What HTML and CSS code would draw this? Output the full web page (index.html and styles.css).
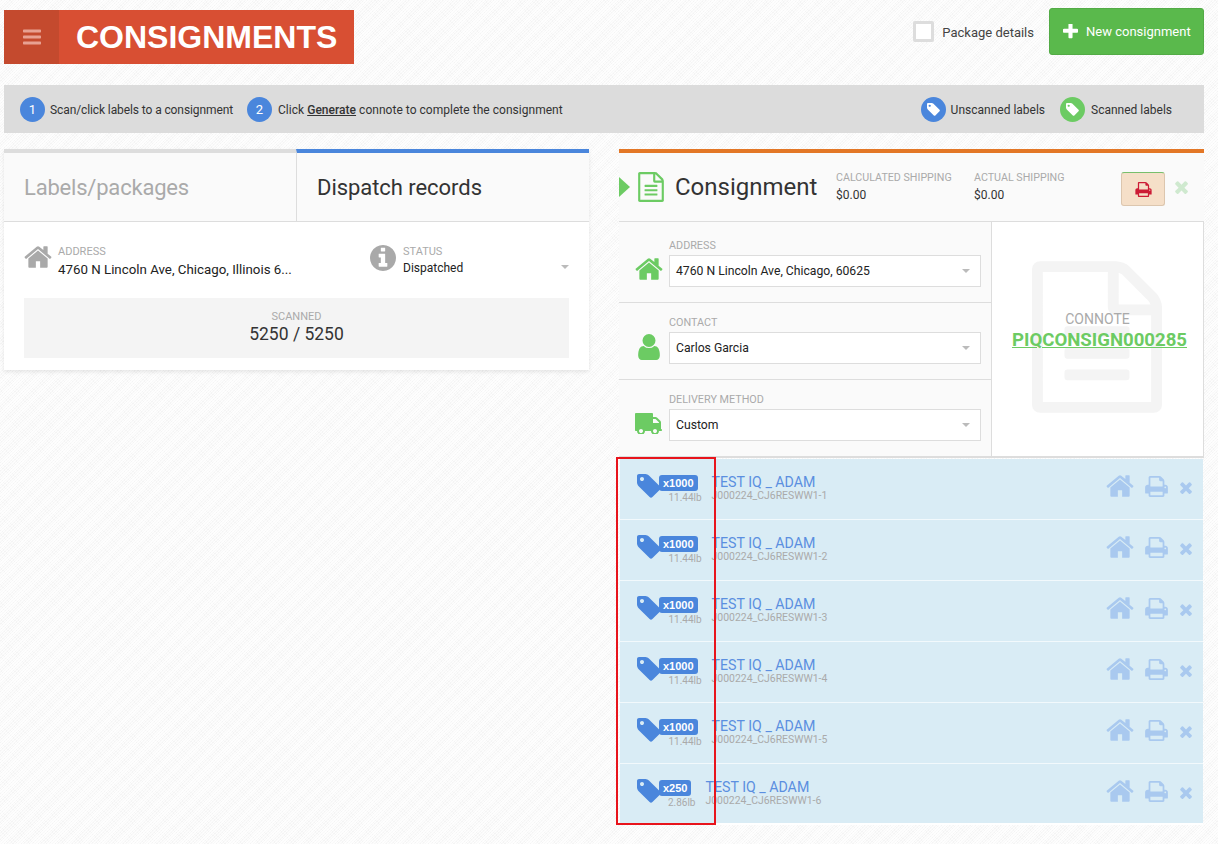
FILE: index.html
```
<!DOCTYPE html>
<html lang="en">
<head>
<meta charset="utf-8">
<title>Consignments</title>
<link rel="stylesheet" href="styles.css">
</head>
<body>
<svg class="defs" width="0" height="0" aria-hidden="true">
  <symbol id="i-home" viewBox="0 0 1792 1792"><path d="M1472 992v480q0 26-19 45t-45 19h-384v-384h-256v384h-384q-26 0-45-19t-19-45v-480q0-1 .5-3t.5-3l575-474 575 474q1 2 1 6zm223-69l-62 74q-8 9-21 11h-3q-13 0-21-7l-692-577-692 577q-12 8-24 7-13-2-21-11l-62-74q-8-10-7-23.5t11-21.5l719-599q32-26 76-26t76 26l244 204v-195q0-14 9-23t23-9h192q14 0 23 9t9 23v408l219 182q10 8 11 21.5t-7 23.5z"/></symbol>
  <symbol id="i-tag" viewBox="128 128 1536 1536"><path d="M576 448q0-53-37.5-90.5t-90.5-37.5-90.5 37.5-37.5 90.5 37.5 90.5 90.5 37.5 90.5-37.5 37.5-90.5zm1067 576q0 53-37 90l-491 492q-39 37-91 37-53 0-90-37l-715-716q-38-37-64.5-101t-26.5-117v-416q0-52 38-90t90-38h416q53 0 117 26.5t102 64.5l715 714q37 39 37 91z"/></symbol>
  <symbol id="i-print" viewBox="64 128 1664 1536"><path d="M448 1536h896v-256h-896v256zm0-640h896v-384h-160q-40 0-68-28t-28-68v-160h-640v640zm1152 64q0-26-19-45t-45-19-45 19-19 45 19 45 45 19 45-19 19-45zm128 0v416q0 13-9.5 22.5t-22.5 9.5h-224v160q0 40-28 68t-68 28h-960q-40 0-68-28t-28-68v-160h-224q-13 0-22.5-9.5t-9.5-22.5v-416q0-79 56.5-135.5t135.5-56.5h64v-544q0-40 28-68t68-28h672q40 0 88 20t76 48l152 152q28 28 48 76t20 88v256h64q79 0 135.5 56.5t56.5 135.5z"/></symbol>
  <symbol id="i-times" viewBox="300 340 1190 1214"><path d="M1490 1322q0 40-28 68l-136 136q-28 28-68 28t-68-28l-294-294-294 294q-28 28-68 28t-68-28l-136-136q-28-28-28-68t28-68l294-294-294-294q-28-28-28-68t28-68l136-136q28-28 68-28t68 28l294 294 294-294q28-28 68-28t68 28l136 136q28 28 28 68t-28 68l-294 294 294 294q28 28 28 68z"/></symbol>
  <symbol id="i-plus" viewBox="192 192 1408 1408"><path d="M1600 736v192q0 40-28 68t-68 28h-416v416q0 40-28 68t-68 28h-192q-40 0-68-28t-28-68v-416h-416q-40 0-68-28t-28-68v-192q0-40 28-68t68-28h416v-416q0-40 28-68t68-28h192q40 0 68 28t28 68v416h416q40 0 68 28t28 68z"/></symbol>
  <symbol id="i-bars" viewBox="128 256 1536 1280"><path d="M1664 1344v128q0 26-19 45t-45 19h-1408q-26 0-45-19t-19-45v-128q0-26 19-45t45-19h1408q26 0 45 19t19 45zm0-512v128q0 26-19 45t-45 19h-1408q-26 0-45-19t-19-45v-128q0-26 19-45t45-19h1408q26 0 45 19t19 45zm0-512v128q0 26-19 45t-45 19h-1408q-26 0-45-19t-19-45v-128q0-26 19-45t45-19h1408q26 0 45 19t19 45z"/></symbol>
  <symbol id="i-user" viewBox="256 128 1280 1536"><path d="M1536 1399q0 109-62.5 187t-150.5 78h-854q-88 0-150.5-78t-62.5-187q0-85 8.5-160.5t31.5-152 58.5-131 94-89 134.5-34.5q131 128 313 128t313-128q76 0 134.5 34.5t94 89 58.5 131 31.5 152 8.5 160.5zm-256-887q0 159-112.5 271.5t-271.5 112.5-271.5-112.5-112.5-271.5 112.5-271.5 271.5-112.5 271.5 112.5 112.5 271.5z"/></symbol>
  <symbol id="i-truck" viewBox="0 256 1792 1280"><path transform="matrix(-1 0 0 1 1792 0)" d="M640 1408q0-52-38-90t-90-38-90 38-38 90 38 90 90 38 90-38 38-90zm-384-512h384v-256h-158q-13 0-22 9l-195 195q-9 9-9 22v30zm1280 512q0-52-38-90t-90-38-90 38-38 90 38 90 90 38 90-38 38-90zm256-1088v1024q0 15-4 26.5t-13.5 18.5-16.5 11.5-23.5 6-22.5 2-25.5 0-22.5-.5q0 106-75 181t-181 75-181-75-75-181h-384q0 106-75 181t-181 75-181-75-75-181h-64q-3 0-22.5.5t-25.5 0-22.5-2-23.5-6-16.5-11.5-13.5-18.5-4-26.5q0-26 19-45t45-19v-320q0-8-.5-35t0-38 2.5-34.5 6.5-37 14-30.5 22.5-30l198-198q19-19 50.5-32t58.5-13h160v-192q0-26 19-45t45-19h1024q26 0 45 19t19 45z"/></symbol>
  <symbol id="i-file" viewBox="128 0 1536 1792"><path d="M1596 380q28 28 48 76t20 88v1152q0 40-28 68t-68 28h-1344q-40 0-68-28t-28-68v-1600q0-40 28-68t68-28h896q40 0 88 20t76 48zm-444-244v376h376q-10-29-22-41l-313-313q-12-12-41-22zm384 1528v-1024h-416q-40 0-68-28t-28-68v-416h-768v1536h1280zm-1024-864q0-14 9-23t23-9h704q14 0 23 9t9 23v64q0 14-9 23t-23 9h-704q-14 0-23-9t-9-23v-64zm736 224q14 0 23 9t9 23v64q0 14-9 23t-23 9h-704q-14 0-23-9t-9-23v-64q0-14 9-23t23-9h704zm0 256q14 0 23 9t9 23v64q0 14-9 23t-23 9h-704q-14 0-23-9t-9-23v-64q0-14 9-23t23-9h704z"/></symbol>
  <symbol id="i-info" viewBox="128 128 1536 1536"><path d="M1152 1376v-160q0-14-9-23t-23-9h-96v-512q0-14-9-23t-23-9h-320q-14 0-23 9t-9 23v160q0 14 9 23t23 9h96v320h-96q-14 0-23 9t-9 23v160q0 14 9 23t23 9h448q14 0 23-9t9-23zm-128-896v-160q0-14-9-23t-23-9h-192q-14 0-23 9t-9 23v160q0 14 9 23t23 9h192q14 0 23-9t9-23zm640 416q0 209-103 385.5t-279.5 279.5-385.5 103-385.5-103-279.5-279.5-103-385.5 103-385.5 279.5-279.5 385.5-103 385.5 103 279.5 279.5 103 385.5z"/></symbol>
</svg>

<div class="page">
  <header class="topbar">
    <div class="brand">
      <div class="brand-menu"><svg class="ico-bars"><use href="#i-bars"/></svg></div>
      <h1 class="brand-title">CONSIGNMENTS</h1>
    </div>
    <div class="top-actions">
      <span class="checkbox"></span>
      <span class="check-label">Package details</span>
      <button class="btn-new"><svg class="ico-plus"><use href="#i-plus"/></svg>New consignment</button>
    </div>
  </header>

  <section class="helpbar">
    <div class="step step-first"><span class="dot dot-blue">1</span><span class="step-text step-tight">Scan/click labels to a consignment</span></div>
    <div class="step step-second"><span class="dot dot-blue">2</span><span class="step-text step-loose">Click <u class="strong">Generate</u> connote to complete the consignment</span></div>
    <div class="legend">
      <div class="step"><span class="dot dot-blue"><svg class="ico-dot"><use href="#i-tag"/></svg></span><span class="step-text">Unscanned labels</span></div>
      <div class="step step-wide"><span class="dot dot-green"><svg class="ico-dot"><use href="#i-tag"/></svg></span><span class="step-text">Scanned labels</span></div>
    </div>
  </section>

  <main class="columns">
    <section class="left card">
      <div class="tabs">
        <div class="tab tab-off">Labels/packages</div>
        <div class="tab tab-on">Dispatch records</div>
      </div>
      <div class="record">
        <div class="record-top">
          <div class="rec-addr">
            <svg class="ico-rec-home"><use href="#i-home"/></svg>
            <div>
              <div class="tiny">ADDRESS</div>
              <div class="rec-value">4760 N Lincoln Ave, Chicago, Illinois 6...</div>
            </div>
          </div>
          <div class="rec-status">
            <svg class="ico-info"><use href="#i-info"/></svg>
            <div>
              <div class="tiny">STATUS</div>
              <div class="rec-status-value">Dispatched</div>
            </div>
            <span class="caret caret-status"></span>
          </div>
        </div>
        <div class="scanned">
          <div class="tiny">SCANNED</div>
          <div class="scanned-num">5250 / 5250</div>
        </div>
      </div>
    </section>

    <section class="right">
      <div class="cons-head">
        <span class="arrow"></span>
        <svg class="ico-file"><use href="#i-file"/></svg>
        <h2 class="cons-title">Consignment</h2>
        <div class="ship ship-calc"><div class="ship-label">CALCULATED SHIPPING</div><div class="ship-val">$0.00</div></div>
        <div class="ship ship-actual"><div class="ship-label">ACTUAL SHIPPING</div><div class="ship-val">$0.00</div></div>
        <button class="btn-print"><svg class="ico-print-red"><use href="#i-print"/></svg></button>
        <svg class="ico-close"><use href="#i-times"/></svg>
      </div>

      <div class="cons-body">
        <div class="fields">
          <div class="field field-first">
            <svg class="ico-field ico-field-home"><use href="#i-home"/></svg>
            <div class="field-main"><div class="field-label">ADDRESS</div><div class="select">4760 N Lincoln Ave, Chicago, 60625<span class="caret"></span></div></div>
          </div>
          <div class="field">
            <svg class="ico-field ico-field-user"><use href="#i-user"/></svg>
            <div class="field-main"><div class="field-label">CONTACT</div><div class="select">Carlos Garcia<span class="caret"></span></div></div>
          </div>
          <div class="field">
            <svg class="ico-field ico-field-truck"><use href="#i-truck"/></svg>
            <div class="field-main"><div class="field-label">DELIVERY METHOD</div><div class="select">Custom<span class="caret"></span></div></div>
          </div>
        </div>
        <div class="connote">
          <svg class="ico-water"><use href="#i-file"/></svg>
          <div class="connote-label">CONNOTE</div>
          <a class="connote-num">PIQCONSIGN000285</a>
        </div>
      </div>

      <div class="list">
        <div class="row"><svg class="ico-tag"><use href="#i-tag"/></svg><div class="qty"><span class="badge">x1000</span><span class="lb">11.44lb</span></div><div class="info"><div class="name">TEST IQ _ ADAM</div><div class="code">J000224_CJ6RESWW1-1</div></div><div class="row-actions"><svg class="act-home"><use href="#i-home"/></svg><svg class="act-print"><use href="#i-print"/></svg><svg class="act-x"><use href="#i-times"/></svg></div></div>
        <div class="row"><svg class="ico-tag"><use href="#i-tag"/></svg><div class="qty"><span class="badge">x1000</span><span class="lb">11.44lb</span></div><div class="info"><div class="name">TEST IQ _ ADAM</div><div class="code">J000224_CJ6RESWW1-2</div></div><div class="row-actions"><svg class="act-home"><use href="#i-home"/></svg><svg class="act-print"><use href="#i-print"/></svg><svg class="act-x"><use href="#i-times"/></svg></div></div>
        <div class="row"><svg class="ico-tag"><use href="#i-tag"/></svg><div class="qty"><span class="badge">x1000</span><span class="lb">11.44lb</span></div><div class="info"><div class="name">TEST IQ _ ADAM</div><div class="code">J000224_CJ6RESWW1-3</div></div><div class="row-actions"><svg class="act-home"><use href="#i-home"/></svg><svg class="act-print"><use href="#i-print"/></svg><svg class="act-x"><use href="#i-times"/></svg></div></div>
        <div class="row"><svg class="ico-tag"><use href="#i-tag"/></svg><div class="qty"><span class="badge">x1000</span><span class="lb">11.44lb</span></div><div class="info"><div class="name">TEST IQ _ ADAM</div><div class="code">J000224_CJ6RESWW1-4</div></div><div class="row-actions"><svg class="act-home"><use href="#i-home"/></svg><svg class="act-print"><use href="#i-print"/></svg><svg class="act-x"><use href="#i-times"/></svg></div></div>
        <div class="row"><svg class="ico-tag"><use href="#i-tag"/></svg><div class="qty"><span class="badge">x1000</span><span class="lb">11.44lb</span></div><div class="info"><div class="name">TEST IQ _ ADAM</div><div class="code">J000224_CJ6RESWW1-5</div></div><div class="row-actions"><svg class="act-home"><use href="#i-home"/></svg><svg class="act-print"><use href="#i-print"/></svg><svg class="act-x"><use href="#i-times"/></svg></div></div>
        <div class="row row-last"><svg class="ico-tag"><use href="#i-tag"/></svg><div class="qty"><span class="badge">x250</span><span class="lb">2.86lb</span></div><div class="info"><div class="name">TEST IQ _ ADAM</div><div class="code">J000224_CJ6RESWW1-6</div></div><div class="row-actions"><svg class="act-home"><use href="#i-home"/></svg><svg class="act-print"><use href="#i-print"/></svg><svg class="act-x"><use href="#i-times"/></svg></div></div>
        <div class="highlight"></div>
      </div>
    </section>
  </main>
</div>
</body>
</html>
```

FILE: styles.css
```
* { box-sizing: border-box; }
html, body { height: 100%; }
body {
  margin: 0;
  overflow: hidden;
  font-family: Roboto, "Liberation Sans", sans-serif;
  color: #333;
  background-color: #f9f9f9;
  background-image:
    repeating-linear-gradient(135deg, rgba(255,255,255,.8) 0 1px, transparent 1px 2px),
    repeating-linear-gradient(45deg, rgba(230,230,230,.25) 0 1px, transparent 1px 3px);
}
.defs { position: absolute; }
svg { fill: currentColor; display: block; flex: none; }
.page { padding: 0 14px 0 4px; }

.topbar { display: flex; justify-content: space-between; height: 85px; }
.brand { display: flex; margin-top: 10px; width: 350px; height: 54px; background: #d84f33; }
.brand-menu { width: 55px; background: #c44a2e; display: flex; align-items: center; justify-content: center; color: #e8a192; }
.ico-bars { width: 18px; height: 16px; }
.brand-title { margin: 0 0 0 17px; font: 700 32px/54px "Liberation Sans", Arial, sans-serif; color: #fff; }
.top-actions { display: flex; align-items: center; height: 47px; margin-top: 8px; }
.checkbox { width: 21px; height: 21px; background: #fff; border: 3px solid #ddd; border-radius: 2px; margin-top: -1px; }
.check-label { font-size: 13px; margin: 2px 15px 0 8px; color: #444; }
.btn-new {
  width: 155px; height: 47px; display: flex; align-items: center; padding: 0 0 1px 13px;
  background: #5ab94c; border: 1px solid #53ab46; border-radius: 3px; color: #fff;
  font: 400 13px Roboto, sans-serif;
}
.ico-plus { width: 15px; height: 15px; margin-right: 8px; }

.helpbar { display: flex; align-items: center; height: 48px; padding: 1px 0 0 16px; background: #dcdcdc; font-size: 12px; color: #333; }
.step { display: flex; align-items: center; gap: 5px; margin-right: 15px; }
.step-first { margin-right: 14px; }
.step-second { gap: 6px; }
.step-text { margin-top: 1px; }
.step-tight { letter-spacing: -.1px; }
.step-loose { letter-spacing: .03px; }
.legend { margin-left: auto; display: flex; margin-right: 18px; }
.legend .step-wide { gap: 6px; margin-right: 14px; }
.dot { width: 25px; height: 25px; border-radius: 50%; display: flex; align-items: center; justify-content: center; color: #fff; font-size: 13px; }
.dot-blue { background: #4a86dc; }
.dot-green { background: #6ccb63; }
.ico-dot { width: 13px; height: 13px; }
.strong { font-weight: 500; }

.columns { display: flex; align-items: flex-start; gap: 30px; margin-top: 16px; }
.card { background: #fff; box-shadow: 0 2px 4px rgba(0,0,0,.09); }
.left { width: 585px; height: 221px; }
.tabs { display: flex; height: 73px; border-bottom: 1px solid #ddd; background: #fafafa; }
.tab { padding: 22px 0 0 20px; font-size: 22px; line-height: 26px; border-top: 4px solid #ddd; }
.tab-off { color: #aaa; width: 292px; letter-spacing: -.2px; }
.tab-on { color: #333; border-top-color: #4a86dc; border-left: 1px solid #ddd; width: 293px; letter-spacing: -.05px; }
.record { padding: 23px 20px 0; }
.record-top { display: flex; height: 53px; }
.rec-addr { display: flex; width: 346px; }
.ico-rec-home { width: 30px; height: 30px; margin: -3px 5px 0 -1px; color: #a9a9a9; }
.tiny { font-size: 11px; line-height: 14px; color: #aaa; }
.rec-value { font-size: 13.3px; line-height: 20px; margin-top: 1px; color: #222; white-space: nowrap; }
.rec-status { display: flex; flex: 1; position: relative; }
.ico-info { width: 26px; height: 26px; color: #a9a9a9; margin-right: 7px; }
.rec-status-value { font-size: 12px; line-height: 18px; color: #222; }
.caret { width: 0; height: 0; border: 4px solid transparent; border-top: 4px solid #bbb; border-bottom: 0; }
.caret-status { margin: 20px 0 0 auto; }
.scanned { height: 60px; background: #f4f4f4; text-align: center; padding-top: 12px; }
.scanned-num { font-size: 17.5px; line-height: 22px; margin-top: -1px; color: #333; }

.right { width: 586px; }
.cons-head {
  display: flex; align-items: center; height: 73px; background: #fafafa;
  border-top: 4px solid #e37726; border-bottom: 1px solid #ddd;
}
.arrow { width: 0; height: 0; border-left: 11px solid #6ccb63; border-top: 10px solid transparent; border-bottom: 10px solid transparent; }
.ico-file { width: 26px; height: 30px; margin-left: 8px; color: #6ccb63; }
.cons-title { margin: 0 0 0 11px; width: 161px; font-size: 24px; line-height: 30px; font-weight: 400; color: #333; }
.ship { width: 138px; }
.ship-label { font-size: 10.7px; line-height: 14px; color: #aaa; }
.ship-val { font-size: 12px; line-height: 16px; margin-top: 2px; color: #333; }
.ship-actual { width: 147px; }
.btn-print { width: 44px; height: 34px; margin-top: 4px; background: #f5dfc8; border: 1px solid #dcc6ae; border-top-color: #78bf6c; border-radius: 3px; display: flex; align-items: center; justify-content: center; color: #cc1b35; padding: 0; }
.ico-print-red { width: 17px; height: 15px; }
.ico-close { width: 13px; height: 13px; margin-left: 10px; color: #cfe9cf; }

.cons-body { display: flex; height: 236px; border-bottom: 2px solid #ddd; border-right: 1px solid #ddd; }
.fields { width: 373px; background: #fafafa; border-right: 1px solid #ddd; }
.field { display: flex; height: 77px; padding: 13px 10px 0 0; border-top: 1px solid #ddd; }
.field-first { height: 80px; padding-top: 17px; border-top: 0; }
.field-main { flex: 1; }
.ico-field { color: #6ccb63; }
.ico-field-home { width: 30px; height: 30px; margin: 15px 5px 0 15px; }
.ico-field-user { width: 22px; height: 26px; margin: 18px 9px 0 19px; }
.ico-field-truck { width: 28px; height: 22px; margin: 19px 6px 0 16px; }
.field-label { font-size: 10.8px; line-height: 14px; color: #aaa; }
.select { position: relative; display: flex; align-items: center; justify-content: space-between; height: 32px; margin-top: 2px; padding: 0 10px 0 6px; background: #fff; border: 1px solid #ddd; font-size: 12.2px; color: #222; }

.connote { flex: 1; background: #fff; position: relative; display: flex; flex-direction: column; align-items: center; padding-top: 89px; }
.ico-water { position: absolute; left: 40px; top: 39px; width: 130px; height: 152px; color: #f4f4f4; }
.connote-label { position: relative; font-size: 14px; line-height: 16px; color: #aaa; }
.connote-num { position: relative; font-size: 18.6px; line-height: 22px; font-weight: 700; color: #6ccb63; text-decoration: underline; margin: 2px 0 0 4px; }

.list { position: relative; width: 583px; margin: 1px 0 0 1px; }
.row { display: flex; height: 61px; padding: 14px 0 0 17px; background: #d9ecf5; border-bottom: 1px solid #f2f9fc; }
.row-last { height: 61px; border-bottom: 2px solid #fff; }
.ico-tag { width: 24px; height: 26px; color: #4a86dc; margin-right: -2px; }
.qty { display: flex; flex-direction: column; align-items: flex-end; margin-right: 10px; margin-top: 2px; }
.badge { height: 16px; padding: 0 4px; margin-right: 4px; border-radius: 3px; background: #4a86dc; color: #fff; font: 700 11px/16px "Liberation Sans", Arial, sans-serif; }
.lb { font-size: 10px; line-height: 14px; color: #aaa; }
.info { padding-top: 1px; }
.name { font-size: 14.2px; line-height: 16px; color: #5b8fe0; white-space: nowrap; }
.code { font-size: 10.45px; line-height: 12px; color: #aaa; white-space: nowrap; }
.row-actions { margin-left: auto; display: flex; align-items: flex-start; padding: 1px 11px 0 0; color: #a9c9ef; }
.act-home { width: 30px; height: 30px; margin-top: -3px; }
.act-print { width: 23px; height: 21px; margin: 2px 0 0 10px; }
.act-x { width: 12px; height: 12px; margin: 8px 0 0 12px; }
.highlight { position: absolute; left: -4px; top: -2px; width: 100px; height: 368px; border: 2px solid #e8141c; }
```
